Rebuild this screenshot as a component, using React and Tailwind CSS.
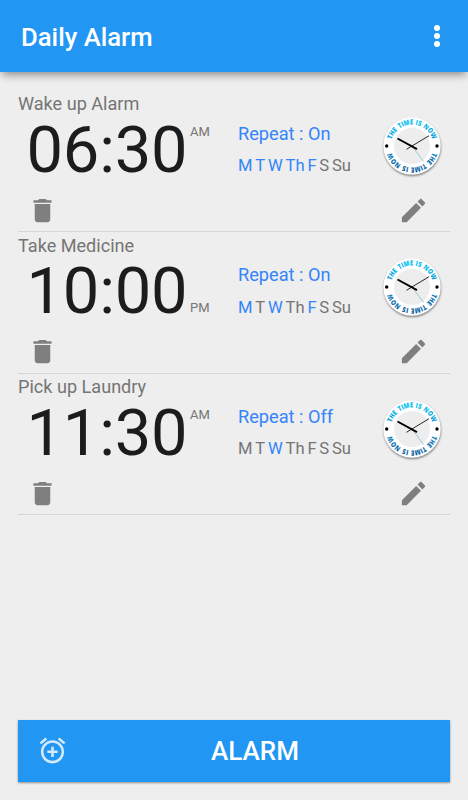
import React from 'react';

const DAYS = ['M', 'T', 'W', 'Th', 'F', 'S', 'Su'];

const ALARMS = [
  { label: 'Wake up Alarm', time: '06:30', period: 'AM', repeat: 'On', days: ['M', 'T', 'W', 'Th', 'F'] },
  { label: 'Take Medicine', time: '10:00', period: 'PM', repeat: 'On', days: ['M', 'W', 'F'] },
  { label: 'Pick up Laundry', time: '11:30', period: 'AM', repeat: 'Off', days: ['W'] },
];

function TrashIcon() {
  return (
    <svg className="size-[31px]" viewBox="0 0 24 24" fill="#7f7f7f">
      <path d="M6 19c0 1.100.9 2 2 2h8c1.100 0 2-.9 2-2V7H6v12zM19 4h-3.500l-1-1h-5l-1 1H5v2h14V4z" />
    </svg>
  );
}

function PencilIcon() {
  return (
    <svg className="size-[31px]" viewBox="0 0 24 24" fill="#7f7f7f">
      <path d="M3 17.250V21h3.750L17.810 9.940l-3.750-3.750L3 17.250zM20.710 7.040c.39-.39.39-1.020 0-1.410l-2.340-2.340c-.39-.39-1.020-.39-1.410 0l-1.830 1.830 3.750 3.750 1.830-1.830z" />
    </svg>
  );
}

function AddAlarmIcon() {
  return (
    <svg className="size-[31px]" viewBox="0 0 24 24" fill="#d3eafd">
      <path d="M7.880 3.390L6.600 1.860 2 5.710l1.290 1.530 4.590-3.850zM22 5.720l-4.600-3.860-1.290 1.530 4.600 3.860L22 5.720zM12 4c-4.970 0-9 4.030-9 9s4.020 9 9 9c4.970 0 9-4.030 9-9s-4.030-9-9-9zm0 16c-3.870 0-7-3.130-7-7s3.130-7 7-7 7 3.130 7 7-3.130 7-7 7zm1-11h-2v3H8v2h3v3h2v-3h3v-2h-3V9z" />
    </svg>
  );
}

function ClockFace({ id }) {
  return (
    <svg className="size-[64px]" viewBox="-32 -32 64 64">
      <defs>
        <path id={id + '-top'} d="M-21.500 0A21.500 21.500 0 0 1 21.500 0" />
        <path id={id + '-bottom'} d="M21.500 0A21.500 21.500 0 0 1 -21.500 0" />
        <filter id={id + '-shadow'} x="-20%" y="-20%" width="140%" height="140%">
          <feGaussianBlur stdDeviation="0.8" />
        </filter>
        <linearGradient id={id + '-cyan'} gradientUnits="userSpaceOnUse" x1="0" y1="-28" x2="0" y2="-4">
          <stop offset="0" stopColor="#00c8f4" />
          <stop offset="1" stopColor="#1499d6" />
        </linearGradient>
        <linearGradient id={id + '-navy'} gradientUnits="userSpaceOnUse" x1="0" y1="6" x2="0" y2="28">
          <stop offset="0" stopColor="#1685c2" />
          <stop offset="1" stopColor="#045a98" />
        </linearGradient>
      </defs>
      <circle cx="0.3" cy="1.400" r="28.600" fill="#000" opacity="0.5" filter={'url(#' + id + '-shadow)'} />
      <circle r="28.700" fill="#fff" />
      <circle r="18" fill="#ededed" />
      <text textAnchor="middle" textLength="54" lengthAdjust="spacingAndGlyphs" className="font-['Open_Sans',sans-serif] text-[7.200px] font-extrabold [word-spacing:1px]" fill={'url(#' + id + '-cyan)'}>
        <textPath href={'#' + id + '-top'} startOffset="50%" textLength="54" lengthAdjust="spacingAndGlyphs">THE TIME IS NOW</textPath>
      </text>
      <text textAnchor="middle" textLength="54" lengthAdjust="spacingAndGlyphs" className="font-['Open_Sans',sans-serif] text-[7.200px] font-extrabold [word-spacing:1px]" fill={'url(#' + id + '-navy)'}>
        <textPath href={'#' + id + '-bottom'} startOffset="50%" textLength="54" lengthAdjust="spacingAndGlyphs">THE TIME IS NOW</textPath>
      </text>
      <circle cx="-25.300" cy="0" r="1.700" fill="#000" />
      <circle cx="25" cy="0" r="1.700" fill="#000" />
      <path d="M0 0L11.500 15.500" stroke="#7fb0cc" strokeWidth="0.7" />
      <path d="M-5.500 3.300L17 -10.300" stroke="#111" strokeWidth="0.9" />
      <path d="M-14.500 -7.500L5 3.200" stroke="#000" strokeWidth="1.900" />
    </svg>
  );
}

function AlarmRow({ alarm, index }) {
  const pm = alarm.period === 'PM';
  return (
    <li className="flex h-[141.400px] flex-col border-b border-[#d5d5d5] pt-[2.500px]">
      <div className="h-[21.500px] whitespace-nowrap text-[18.100px] leading-[21px] text-[#757575]">{alarm.label}</div>
      <div className="flex h-[78px]">
        <div className="flex w-[220px] pl-[8.500px]">
          <span className="w-[163.500px] whitespace-nowrap text-[65px] leading-[70px] tracking-[-0.2px] text-[#1c1c1c]">{alarm.time}</span>
          <span className={'text-[13px] leading-[16px] text-[#757575] ' + (pm ? 'pt-[44px]' : 'pt-[9px]')}>{alarm.period}</span>
        </div>
        <div className="flex flex-1 flex-col gap-[12.500px] pt-[8px]">
          <div className="whitespace-nowrap text-[18.200px] leading-[21px] text-[#3484fa]">Repeat : {alarm.repeat}</div>
          <div className="flex gap-[2.800px] text-[16.600px] leading-[20px]">
            {DAYS.map((day) => (
              <span key={day} className={alarm.days.includes(day) ? 'text-[#3484fa]' : 'text-[#757575]'}>{day}</span>
            ))}
          </div>
        </div>
        <div className="mr-[6px] -mt-px">
          <ClockFace id={'clock' + index} />
        </div>
      </div>
      <div className="flex h-[35px] items-center justify-between pr-[21px] pl-[9px]">
        <TrashIcon />
        <PencilIcon />
      </div>
    </li>
  );
}

export default function App() {
  return (
    <div className="flex h-[800px] w-[468px] flex-col overflow-hidden bg-[#eeeeee] font-[Roboto,sans-serif]">
      <header className="flex h-[72px] shrink-0 items-center justify-between bg-[#2196f3] pr-[28px] pl-[21px] pt-[2px] shadow-[0_5px_8px_-2px_rgba(0,0,0,0.4)]">
        <h1 className="text-[25.700px] font-medium text-white">Daily Alarm</h1>
        <div className="flex flex-col gap-[2px] pb-[2px]">
          <i className="size-[6px] rounded-full bg-white" />
          <i className="size-[6px] rounded-full bg-white" />
          <i className="size-[6px] rounded-full bg-white" />
        </div>
      </header>
      <ul className="mx-[18px] mt-[18.800px] flex flex-1 flex-col">
        {ALARMS.map((alarm, index) => (
          <AlarmRow key={alarm.label} alarm={alarm} index={index} />
        ))}
      </ul>
      <button className="mx-[18px] mb-[18px] flex h-[62.500px] items-center bg-[#2196f3] pl-[18.500px] shadow-[0_1px_2px_rgba(0,0,0,0.4)]">
        <AddAlarmIcon />
        <span className="flex-1 pt-[2px] pr-[7.500px] text-center text-[26px] font-medium text-white">ALARM</span>
      </button>
    </div>
  );
}
